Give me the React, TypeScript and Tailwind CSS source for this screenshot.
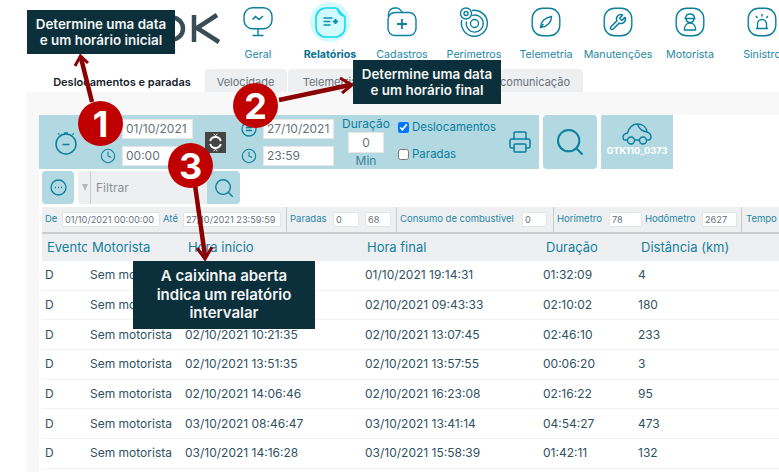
import { Clock, Printer, Search, Wrench } from "lucide-react";

const teal = "#0a7f9e";

const rows = [
  ["01/10/2021 17:42:22", "01/10/2021 19:14:31", "01:32:09", "4"],
  ["02/10/2021 07:33:31", "02/10/2021 09:43:33", "02:10:02", "180"],
  ["02/10/2021 10:21:35", "02/10/2021 13:07:45", "02:46:10", "233"],
  ["02/10/2021 13:51:35", "02/10/2021 13:57:55", "00:06:20", "3"],
  ["02/10/2021 14:06:46", "02/10/2021 16:23:08", "02:16:22", "95"],
  ["03/10/2021 08:46:47", "03/10/2021 13:41:14", "04:54:27", "473"],
  ["03/10/2021 14:16:28", "03/10/2021 15:58:39", "01:42:11", "132"],
];

function Squircle() {
  return <rect x="1.2" y="1.2" width="27.6" height="27.6" rx="10.5" fill="none" stroke={teal} strokeWidth="1.4" />;
}

function NavIcon({ name }: { name: string }) {
  if (name === "Geral")
    return (
      <svg width="30" height="30" viewBox="0 0 30 30" fill="none" stroke={teal} strokeWidth="1.4">
        <rect x="1" y="0.8" width="28" height="21" rx="8.5" />
        <path d="M15 22v6M9.5 28.5h11" />
        <path d="M9.5 12.5l3-3 3.5 3 4-3.5" strokeWidth="1.6" />
      </svg>
    );
  if (name === "Relatórios")
    return (
      <svg width="42" height="42" viewBox="0 0 42 42" fill="none">
        <circle cx="21" cy="21" r="20" fill="#d2fbff" />
        <path d="M17 7h10l9 9v10a10 10 0 0 1-10 10H17A10 10 0 0 1 7 26V17A10 10 0 0 1 17 7z" stroke="#14d8f2" strokeWidth="1.6" />
        <path d="M29 7.5c0 5 2 7 6.500 7.500" stroke="#14d8f2" strokeWidth="1.4" />
        <path d="M14.500 17h9M14.500 20.500h7M14.500 24h7" stroke="#0a8fae" strokeWidth="1.4" />
        <path d="M24 20.500h5M26.500 18v5" stroke="#0a8fae" strokeWidth="2" />
      </svg>
    );
  if (name === "Cadastros")
    return (
      <svg width="30" height="30" viewBox="0 0 30 30" fill="none" stroke={teal} strokeWidth="1.4">
        <path d="M1.500 10V7a6 6 0 0 1 6-6h2.500c3 0 4 3.500 6 4.500" />
        <rect x="1" y="5.500" width="28" height="23" rx="7" />
        <path d="M15 12v10M10 17h10" strokeWidth="1.8" />
      </svg>
    );
  if (name === "Perímetros")
    return (
      <svg width="30" height="30" viewBox="0 0 30 30" fill="none" stroke={teal} strokeWidth="1.4">
        <path d="M13 3.500A13 13 0 1 1 2.800 13" />
        <path d="M13 8.500a8.500 8.500 0 1 1-5.500 6" strokeWidth="1.300" />
        <circle cx="15.500" cy="16.500" r="4" />
        <circle cx="7" cy="6.500" r="5.500" />
        <circle cx="7" cy="6.500" r="2" />
      </svg>
    );
  if (name === "Telemetria")
    return (
      <svg width="30" height="30" viewBox="0 0 30 30" fill="none" stroke={teal} strokeWidth="1.4">
        <Squircle />
        <path d="M9.500 20.500c0-5.500 4-10 11-11 0 6.500-4.500 10-11 11zM9.500 20.500l3-3.500" />
      </svg>
    );
  if (name === "Manutenções")
    return (
      <svg width="30" height="30" viewBox="0 0 30 30" fill="none">
        <Squircle />
        <Wrench x="6" y="6" width="18" height="18" stroke={teal} strokeWidth="2" />
      </svg>
    );
  if (name === "Motorista")
    return (
      <svg width="30" height="30" viewBox="0 0 30 30" fill="none" stroke={teal} strokeWidth="1.4">
        <Squircle />
        <path d="M10.500 11.500c0-3 2-4.500 4.500-4.500s4.500 1.500 4.500 4.500zM9.500 11.500h11" />
        <path d="M11 12c.5 2.500 2 3.500 4 3.500s3.500-1 4-3.500" />
        <path d="M9.500 23v-1.500c0-3 2.500-5.500 5.500-5.500s5.500 2.500 5.500 5.500V23z" />
      </svg>
    );
  return (
    <svg width="30" height="30" viewBox="0 0 30 30" fill="none" stroke={teal} strokeWidth="1.4">
      <Squircle />
      <path d="M10.500 21v-4a4.500 4.500 0 0 1 9 0v4M9 21.500h12" />
      <path d="M15 7v2.500M9 9l1.500 2M21 9l-1.500 2" />
    </svg>
  );
}

function SmallCalendar() {
  return (
    <svg width="16" height="16" viewBox="0 0 16 16" fill="none" stroke={teal} strokeWidth="1.3">
      <circle cx="8" cy="8" r="7" />
      <path d="M5 6.500h6M5 9.500h6" />
    </svg>
  );
}

function BarInput({ value }: { value: string }) {
  return (
    <input
      readOnly
      value={value}
      className="w-[71px] h-[20px] bg-white border border-[#e6e6e6] px-[3px] text-[12px] text-[#66727a] outline-none"
    />
  );
}

function DateBlock({ date, time }: { date: string; time: string }) {
  return (
    <div className="flex items-center gap-[6px]">
      <div className="flex flex-col gap-[11px] items-center w-[16px]">
        <SmallCalendar />
        <Clock size={16} color={teal} strokeWidth={1.6} />
      </div>
      <div className="flex flex-col gap-[7px]">
        <BarInput value={date} />
        <BarInput value={time} />
      </div>
    </div>
  );
}

function SumLabel({ children, className = "" }: { children: string; className?: string }) {
  return <span className={`shrink-0 text-[9.500px] text-[#2487a6] whitespace-nowrap ${className}`}>{children}</span>;
}

function SumInput({ value, w }: { value: string; w: string }) {
  return (
    <input
      readOnly
      value={value}
      className={`${w} shrink-0 h-[15px] bg-white border border-[#e4e4e4] rounded-[2px] px-[2px] text-[9.200px] text-[#66727a] outline-none`}
    />
  );
}

function Divider({ className }: { className: string }) {
  return <div className={`w-px h-[26px] shrink-0 bg-[#c9cbcd] ${className}`} />;
}

function Tooltip({ className, children }: { className: string; children: React.ReactNode }) {
  return (
    <div className={`absolute flex items-center justify-center text-center bg-[#0b303b] text-[#f2f4f4] font-semibold ${className}`}>
      <div>{children}</div>
    </div>
  );
}

function Badge({ className, n }: { className: string; n: string }) {
  return (
    <div className={`absolute w-[45px] h-[45px] rounded-full bg-[#c00000] text-white font-bold text-[36px] leading-none flex items-center justify-center ${className}`}>
      {n}
    </div>
  );
}

export default function App() {
  const nav = ["Geral", "Relatórios", "Cadastros", "Perímetros", "Telemetria", "Manutenções", "Motorista", "Sinistro"];
  return (
    <div className="relative w-[779px] h-[472px] overflow-hidden bg-white font-['Inter',sans-serif]">
      {/* topo */}
      <header className="flex h-[69px]">
        <div className="w-[222px] pl-[150px] pt-[12px]">
          <svg width="72" height="32" viewBox="0 0 72 32" fill="none" stroke="#3a4d55" strokeWidth="4.500">
            <circle cx="22" cy="16.500" r="11" />
            <path d="M44 3v27M67 3L47 16l22 14" />
          </svg>
        </div>
        <nav className="flex">
          {nav.map((item) => (
            <div key={item} className="relative w-[72px] h-[62px] flex flex-col items-center">
              <div className="h-[44px] flex items-center justify-center">
                <NavIcon name={item} />
              </div>
              <span className={`mt-[4px] text-[10.700px] leading-[14px] whitespace-nowrap ${item === "Relatórios" ? "font-bold text-[#0a7291]" : "text-[#1f87a7]"}`}>
                {item}
              </span>
            </div>
          ))}
        </nav>
      </header>

      {/* abas */}
      <div className="flex w-[583px] h-[23px] pl-[41px] gap-[1.500px] text-[11px]">
        <div className="w-[162px] pt-[3px] bg-white rounded-t-[4px] flex items-center justify-center font-semibold text-[#15222b]">Deslocamentos e paradas</div>
        <div className="w-[82px] pt-[3px] bg-[#eeeff1] rounded-t-[4px] flex items-center justify-center text-[#66727a]">Velocidade</div>
        <div className="w-[84px] pt-[3px] bg-[#eeeff1] rounded-t-[4px] flex items-center justify-center text-[#66727a]">Telemetria</div>
        <div className="ml-auto w-[130px] pt-[3px] pr-[13px] bg-[#eeeff1] rounded-t-[4px] flex items-center justify-end text-[#66727a]">Sem comunicação</div>
      </div>

      <main className="ml-[26px] h-[380px] bg-[#f8f8f8]">
        <div className="h-[23px]" />
        <div className="ml-[13px] bg-white h-[357px]">
          {/* filtros */}
          <div className="flex gap-[4px] h-[54px]">
            <div className="w-[500px] bg-[#b2d8e2] flex items-center text-[#0a7f9e]">
              <div className="ml-[16px] mr-[23px] mt-[2px]">
                <svg width="22" height="24" viewBox="0 0 22 24" fill="none" stroke={teal} strokeWidth="1.500">
                  <circle cx="11" cy="13" r="10" />
                  <path d="M7.500 13.500h7M4.500 3.500L3 2.500M17.500 3.500l1.500-1M9 2h4" />
                </svg>
              </div>
              <DateBlock date="01/10/2021" time="00:00" />
              <div className="ml-[12px] mr-[15px] w-[21px] h-[21px] bg-[#454545] flex items-center justify-center">
                <svg width="19" height="19" viewBox="0 0 19 19" fill="none" stroke="#fff" strokeWidth="2">
                  <path d="M4.200 8a5.500 5.500 0 0 1 10.600 0M14.800 11a5.500 5.500 0 0 1-10.600 0" />
                  <path d="M7.500 1l2 1.500 2-1.500M7.500 18l2-1.500 2 1.500" strokeWidth="1" />
                </svg>
              </div>
              <DateBlock date="27/10/2021" time="23:59" />
              <div className="ml-[2px] w-[60px] flex flex-col items-center text-[12px] leading-[14px]">
                <span className="text-[#0a7f9e]">Duração</span>
                <input
                  readOnly
                  value="0"
                  className="w-[36px] h-[21px] my-[1px] bg-white border border-[#e6e6e6] text-center text-[12px] text-[#66727a] outline-none"
                />
                <span className="text-[#3b8298]">Min</span>
              </div>
              <div className="ml-[2px] -mt-[3px] flex flex-col gap-[13px] text-[11.500px] leading-[14px]">
                <label className="flex items-center gap-[3px]">
                  <input type="checkbox" checked readOnly className="w-[11px] h-[11px] accent-[#0075ff]" />
                  Deslocamentos
                </label>
                <label className="flex items-center gap-[3px]">
                  <input type="checkbox" readOnly className="w-[11px] h-[11px]" />
                  Paradas
                </label>
              </div>
              <Printer className="ml-auto mr-[7px]" size={24} color={teal} strokeWidth={1.500} />
            </div>
            <div className="w-[54px] bg-[#b2d8e2] rounded-[4px] flex items-center justify-center">
              <Search size={32} color={teal} strokeWidth={1.500} />
            </div>
            <div className="w-[72px] bg-[#b2d8e2] flex flex-col items-center pt-[8px]">
              <svg width="30" height="22" viewBox="0 0 30 22" fill="none" stroke={teal} strokeWidth="1.400">
                <path d="M5.500 17H3C1.500 17 1 15.500 1 14c0-2.500 2-3.500 4.500-4C7 5 10 1 15.500 1c6 0 9 4 9.500 8 2.500 1 4 2.500 4 5 0 2-1 3-3 3h-1.500" />
                <path d="M12.500 17h5M15.500 1c1 4 4 7 9.500 8" />
                <circle cx="9" cy="17.500" r="3.500" />
                <circle cx="21" cy="17.500" r="3.500" />
              </svg>
              <span className="text-[9.300px] font-bold text-white leading-[10px] mt-[1px]">GTK110_0373</span>
            </div>
          </div>

          {/* filtrar */}
          <div className="flex ml-[3px] mt-[2px] h-[33px]">
            <div className="w-[32px] bg-[#b2d8e2] rounded-[4px] flex items-center justify-center">
              <svg width="17" height="17" viewBox="0 0 17 17" fill="none" stroke={teal} strokeWidth="1.300">
                <circle cx="8.500" cy="8.500" r="7.500" />
                <path d="M5 8.500h1M8 8.500h1M11 8.500h1" strokeWidth="1.600" />
              </svg>
            </div>
            <div className="ml-[4px] w-[129px] bg-[#eeeff1] rounded-l-[4px] flex items-center">
              <span className="ml-[4px] w-0 h-0 border-x-[3.500px] border-x-transparent border-t-[7px] border-t-[#b4b8bb]" />
              <span className="ml-[2px] w-px h-full bg-[#c9cbcd]" />
              <span className="ml-[5px] text-[12px] text-[#8a9298]">Filtrar</span>
            </div>
            <div className="w-[33px] bg-[#b2d8e2] rounded-r-[4px] flex items-center justify-center">
              <Search size={22} color={teal} strokeWidth={1.500} />
            </div>
          </div>

          {/* resumo */}
          <div className="ml-[3px] mt-[3px] h-[27px] bg-[#eeeff1] border-b-2 border-[#c9cbcd] flex items-center overflow-hidden pl-[3px]">
            <SumLabel className="w-[17px]">De</SumLabel>
            <SumInput value="01/10/2021 00:00:00" w="w-[98px]" />
            <SumLabel className="ml-[3px] w-[20px]">Até</SumLabel>
            <SumInput value="27/10/2021 23:59:59" w="w-[98px]" />
            <Divider className="ml-[5px]" />
            <SumLabel className="ml-[3px] w-[43px]">Paradas</SumLabel>
            <SumInput value="0" w="w-[26px]" />
            <SumInput value="68" w="ml-[6px] w-[26px]" />
            <Divider className="ml-[5px]" />
            <SumLabel className="ml-[3px] w-[122px]">Consumo de combustível</SumLabel>
            <SumInput value="0" w="w-[25px]" />
            <Divider className="ml-[6px]" />
            <SumLabel className="ml-[3px] w-[52px]">Horímetro</SumLabel>
            <SumInput value="78" w="w-[33px]" />
            <SumLabel className="ml-[3px] w-[57px]">Hodômetro</SumLabel>
            <SumInput value="2627" w="w-[35px]" />
            <Divider className="ml-[4px]" />
            <SumLabel className="ml-[4px]">Tempo</SumLabel>
          </div>

          {/* tabela */}
          <div className="ml-[3px]">
            <div className="h-[27px] bg-[#eeeff1] grid grid-cols-[48px_95px_180px_178px_95px_1fr] items-center text-[13px] text-[#1480a0]">
              <span className="pl-[5px] w-[45px] overflow-hidden">Evento</span>
              <span className="pl-[2px]">Motorista</span>
              <span className="pl-[3px]">Hora início</span>
              <span className="pl-[2px]">Hora final</span>
              <span className="pl-[3px]">Duração</span>
              <span className="pl-[3px]">Distância (km)</span>
            </div>
            {rows.map((r) => (
              <div key={r[0]} className="h-[29.700px] border-b border-[#f2f2f2] grid grid-cols-[48px_95px_180px_178px_95px_1fr] items-center text-[12px] text-[#2f5261]">
                <span className="pl-[3px]">D</span>
                <span>Sem motorista</span>
                <span>{r[0]}</span>
                <span>{r[1]}</span>
                <span>{r[2]}</span>
                <span>{r[3]}</span>
              </div>
            ))}
          </div>
        </div>
      </main>

      {/* anotações */}
      <svg className="absolute left-0 top-0 pointer-events-none" width="779" height="472" fill="none" stroke="#8b0000" strokeWidth="4.500">
        <path d="M92 102L81 58" />
        <path d="M75 66L80.500 56 88 63" strokeWidth="3" />
        <path d="M279 100L350 85" />
        <path d="M340 78L352 85 342 93" strokeWidth="3" />
        <path d="M195 185L205 256" />
        <path d="M197 248L205 259 212 247" strokeWidth="3" />
      </svg>
      <Tooltip className="left-[27px] top-[10px] w-[148px] h-[44px] text-[13.400px] leading-[16px]">
        Determine uma data<br />e um horário inicial
      </Tooltip>
      <Tooltip className="left-[353px] top-[60px] w-[148px] h-[44px] text-[13.400px] leading-[16px]">
        Determine uma data<br />e um horário final
      </Tooltip>
      <Tooltip className="left-[133px] top-[261px] w-[182px] h-[68px] text-[15px] leading-[18.500px]">
        A caixinha aberta<br />indica um relatório<br />intervalar
      </Tooltip>
      <Badge className="left-[78px] top-[101px]" n="1" />
      <Badge className="left-[233px] top-[83px]" n="2" />
      <Badge className="left-[168px] top-[143px]" n="3" />
    </div>
  );
}
